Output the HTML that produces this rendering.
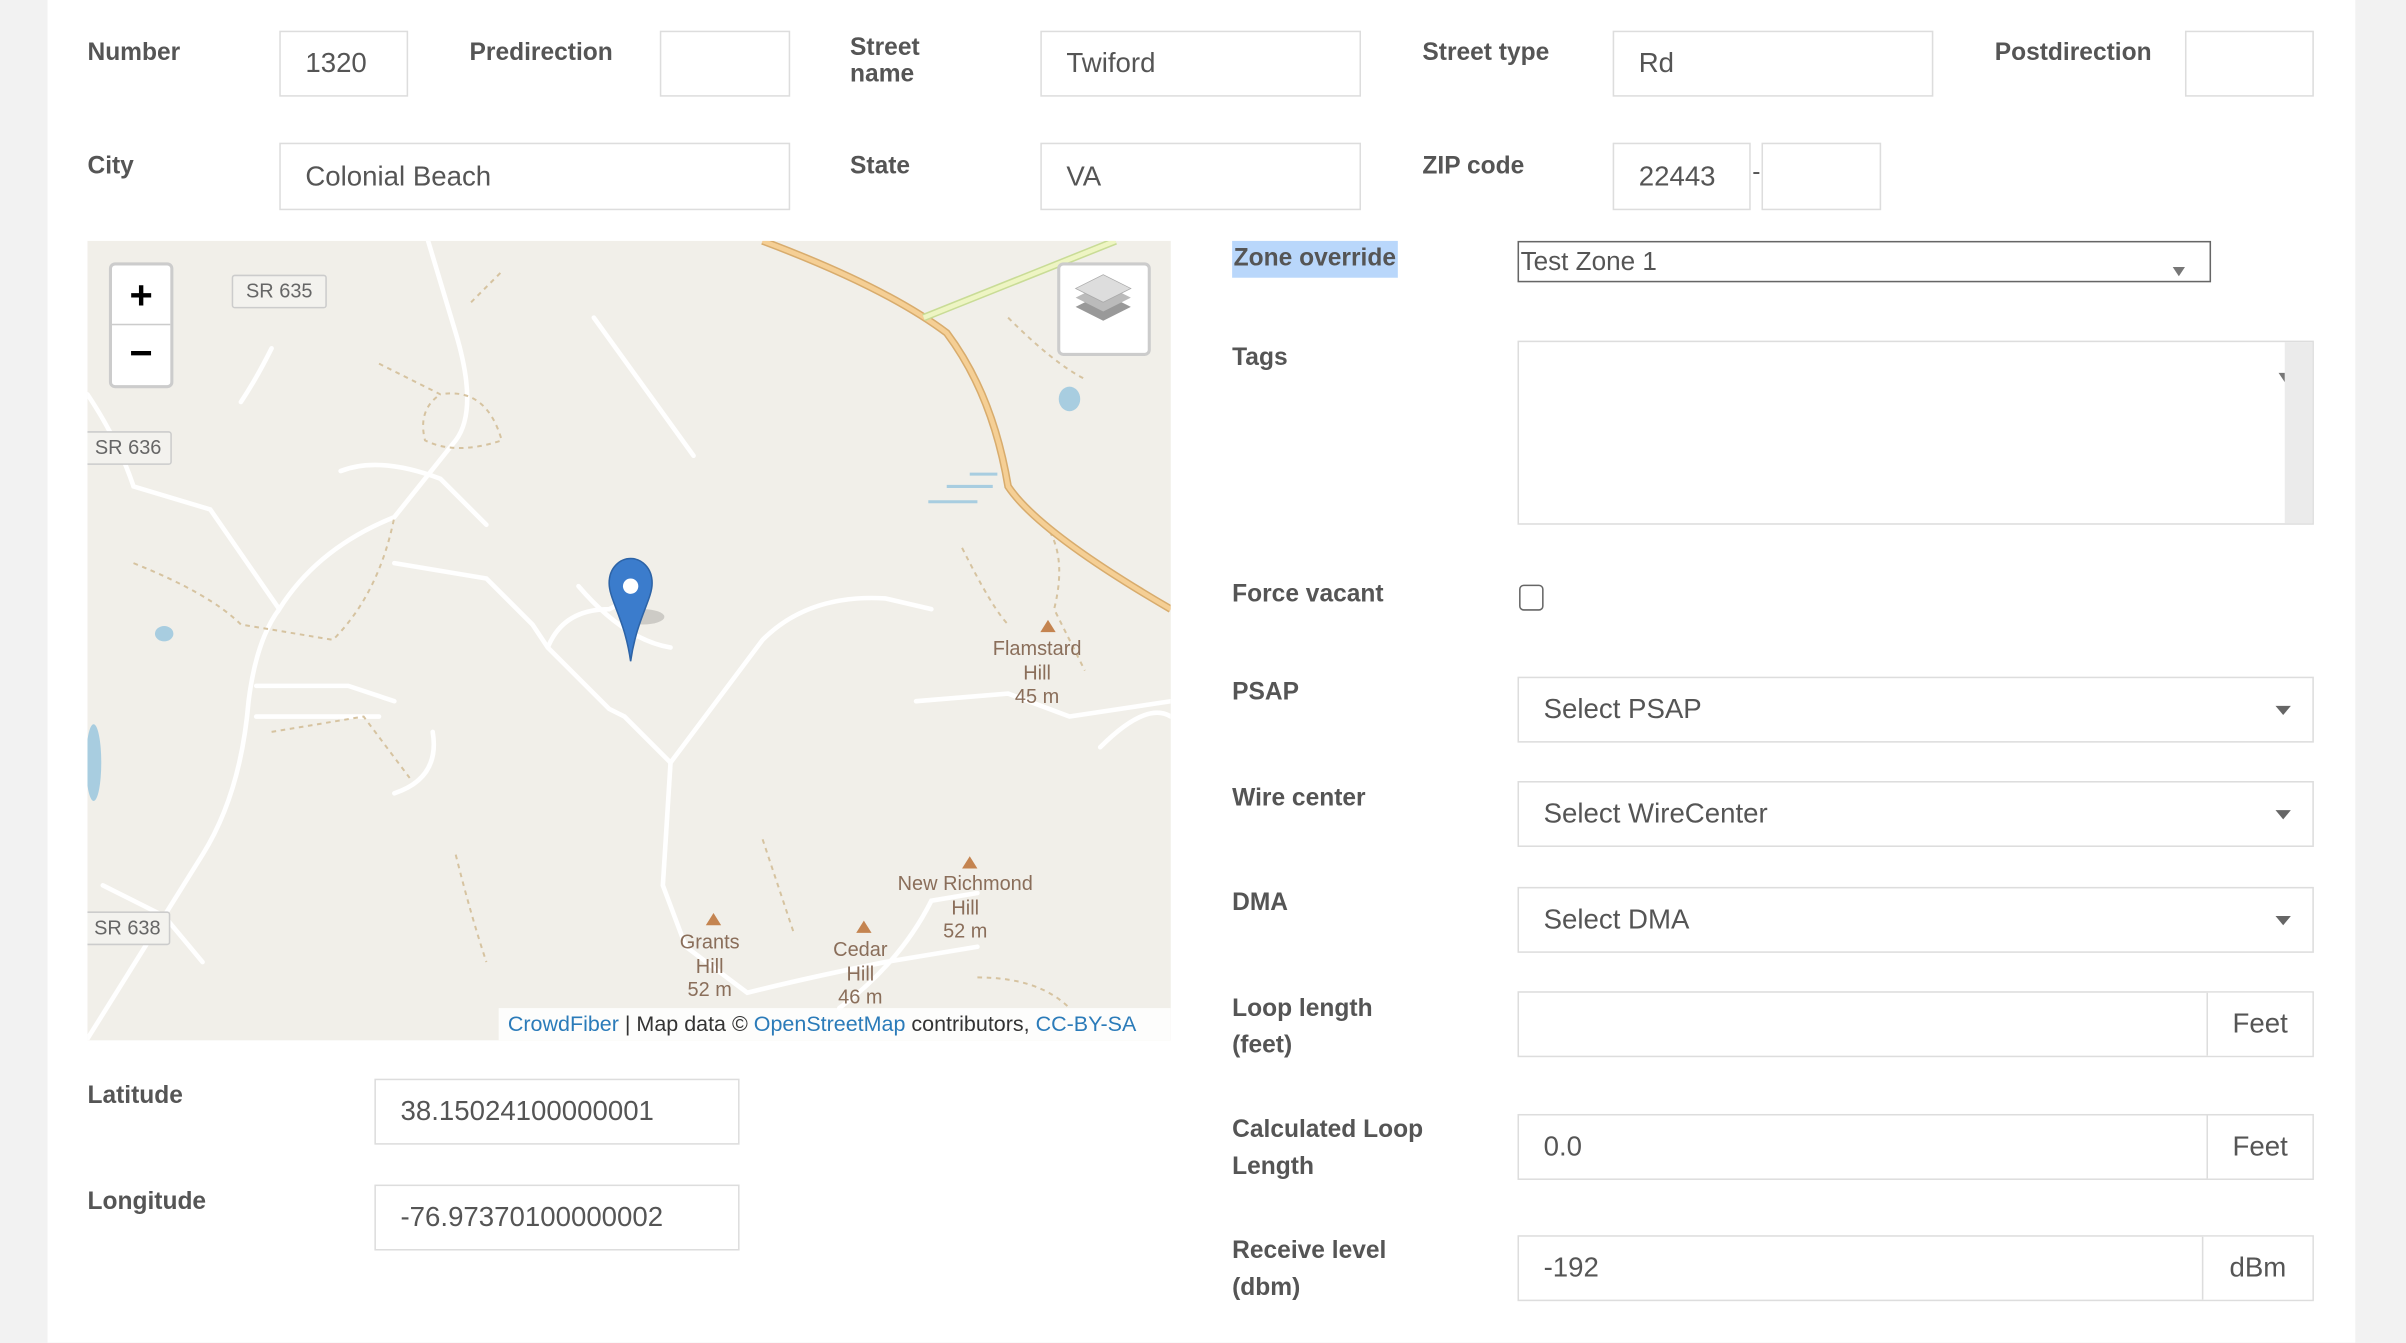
<!DOCTYPE html>
<html><head><meta charset="utf-8">
<style>
*{box-sizing:border-box;margin:0;padding:0}
html,body{width:2406px;height:1342px;overflow:hidden;background:#f2f2f2}
#w{position:absolute;left:0;top:0;width:1568px;height:875px;transform:scale(1.5344);transform-origin:0 0;font-family:"Liberation Sans",sans-serif;color:#555}
.panel{position:absolute;left:31px;top:0;width:1504px;height:875px;background:#fff}
.lb{position:absolute;font-weight:bold;font-size:16px;line-height:24px;color:#555}
.in{position:absolute;border:1px solid #ddd;background:#fff;font-size:18px;color:#555;padding-left:16px;display:flex;align-items:center}
.sel::after{content:"";position:absolute;right:14px;top:50%;margin-top:-3px;border-left:5px solid transparent;border-right:5px solid transparent;border-top:6px solid #666}
.add{position:absolute;right:0;top:0;bottom:0;border-left:1px solid #ddd;background:#fff;display:flex;align-items:center;justify-content:center}
.ml{position:absolute;font-size:13px;color:#8a6e5a;text-align:center;line-height:15.5px}
</style></head><body><div id="w">
<div class="panel"></div>

<div class="lb" style="left:57px;top:23px">Number</div>
<div class="in" style="left:182px;top:20px;width:84px;height:43px">1320</div>
<div class="lb" style="left:306px;top:23px">Predirection</div>
<div class="in" style="left:430px;top:20px;width:85px;height:43px"></div>
<div class="lb" style="left:554px;top:23px;line-height:17px">Street<br>name</div>
<div class="in" style="left:678px;top:20px;width:209px;height:43px">Twiford</div>
<div class="lb" style="left:927px;top:23px">Street type</div>
<div class="in" style="left:1051px;top:20px;width:209px;height:43px">Rd</div>
<div class="lb" style="left:1300px;top:23px">Postdirection</div>
<div class="in" style="left:1424px;top:20px;width:84px;height:43px"></div>

<div class="lb" style="left:57px;top:97px">City</div>
<div class="in" style="left:182px;top:93px;width:333px;height:44px">Colonial Beach</div>
<div class="lb" style="left:554px;top:97px">State</div>
<div class="in" style="left:678px;top:93px;width:209px;height:44px">VA</div>
<div class="lb" style="left:927px;top:97px">ZIP code</div>
<div class="in" style="left:1051px;top:93px;width:90px;height:44px">22443</div>
<div style="position:absolute;left:1142px;top:104px;font-size:16px">-</div>
<div class="in" style="left:1148px;top:93px;width:78px;height:44px"></div>

<!-- map -->
<div style="position:absolute;left:57px;top:157px;width:706px;height:521px;background:#f1efe9;overflow:hidden">
<svg width="706" height="521" style="position:absolute;left:0;top:0" fill="none">
<g stroke="#fff" stroke-width="3" stroke-linecap="round">
<path d="M0 100 Q20 130 30 160 L80 175 L125 240 Q150 200 200 180 L240 130 Q255 110 240 60 L222 0"/>
<path d="M125 240 Q110 260 105 300 Q100 360 75 400 L0 520"/>
<path d="M110 290 L170 290 L200 300"/>
<path d="M110 310 L190 310"/>
<path d="M200 210 L260 220 L290 250 L300 265 L340 305 L350 310 L380 340 L440 260 Q470 230 520 233 L550 240"/>
<path d="M380 340 L375 420 L390 460 L430 490 Q470 480 520 470 L580 460"/>
<path d="M320 225 Q350 260 380 265"/>
<path d="M300 265 Q310 240 340 240 L360 230"/>
<path d="M165 150 Q190 140 230 155 L260 185"/>
<path d="M540 300 L600 295 L640 310 L706 300"/>
<path d="M490 500 Q530 470 550 430 L580 425"/>
<path d="M660 330 Q690 300 706 310"/>
<path d="M10 420 L50 440 L75 470"/>
<path d="M225 320 Q230 350 200 360"/>
<path d="M120 70 Q110 90 100 105"/>
<path d="M330 50 L395 140"/>
</g>
<g stroke="#d6c3a0" stroke-width="1.3" stroke-dasharray="3 3">
<path d="M190 80 L230 100 Q260 95 270 130 Q240 140 220 130 Q215 110 230 100"/>
<path d="M250 40 L270 20"/>
<path d="M30 210 Q80 230 100 250 L160 260 Q190 230 200 180"/>
<path d="M570 200 Q590 240 600 250"/>
<path d="M620 180 Q640 200 630 240 L650 280"/>
<path d="M120 320 L180 310 L210 350"/>
<path d="M440 390 Q450 420 460 450"/>
<path d="M580 480 Q620 480 640 500"/>
<path d="M240 400 Q250 440 260 470"/>
<path d="M600 50 Q630 80 650 90"/>
</g>
<path d="M440 0 Q520 30 560 60 Q590 100 600 160 Q620 190 706 240" stroke="#d8ac6d" stroke-width="5"/>
<path d="M440 0 Q520 30 560 60 Q590 100 600 160 Q620 190 706 240" stroke="#f5cf95" stroke-width="3"/>
<path d="M545 50 L670 0" stroke="#c9dc96" stroke-width="5"/>
<path d="M545 50 L670 0" stroke="#eef5c3" stroke-width="3"/>
<g fill="#a8cde0"><ellipse cx="640" cy="103" rx="7" ry="8"/><ellipse cx="50" cy="256" rx="6" ry="5"/><ellipse cx="4" cy="340" rx="5" ry="25"/></g>
<g stroke="#a8cde0" stroke-width="2"><path d="M575 152 L593 152M560 160 L590 160M548 170 L580 170"/></g>
<g fill="#c48450"><path d="M626 247 L631 255 L621 255Z"/><path d="M575 401 L580 409 L570 409Z"/><path d="M408 438 L413 446 L403 446Z"/><path d="M506 443 L511 451 L501 451Z"/></g>
<ellipse cx="362" cy="245" rx="14" ry="5" fill="#000" opacity=".15"/>
<path d="M354 209 C354 199 361 193 368 193 C375 193 382 199 382 209 C382 220 372 232 368 260 C364 232 354 220 354 209Z" transform="translate(-14 14)" fill="#3b7ccc" stroke="#2d63a6" stroke-width="1"/>
<circle cx="354" cy="225" r="5" fill="#fff"/>
</svg>
<div style="position:absolute;left:94px;top:22px;width:62px;height:22px;background:#f3f2ee;border:1px solid #ccc;border-radius:2px;font-size:13px;color:#666;text-align:center;line-height:20px">SR 635</div>
<div style="position:absolute;left:-2px;top:124px;width:57px;height:22px;background:#f3f2ee;border:1px solid #ccc;border-radius:2px;font-size:13px;color:#666;text-align:center;line-height:20px">SR 636</div>
<div style="position:absolute;left:-2px;top:437px;width:56px;height:22px;background:#f3f2ee;border:1px solid #ccc;border-radius:2px;font-size:13px;color:#666;text-align:center;line-height:20px">SR 638</div>
<div class="ml" style="left:590px;top:258px">Flamstard<br>Hill<br>45 m</div>
<div class="ml" style="left:528px;top:411px">New Richmond<br>Hill<br>52 m</div>
<div class="ml" style="left:386px;top:449px">Grants<br>Hill<br>52 m</div>
<div class="ml" style="left:486px;top:454px">Cedar<br>Hill<br>46 m</div>
<div style="position:absolute;left:14px;top:14px;width:42px;height:82px;background:#fff;border:2px solid #ccc;border-radius:4px">
<div style="height:39px;border-bottom:1px solid #ccc;text-align:center;font-size:26px;line-height:38px;color:#000;font-weight:bold">+</div>
<div style="height:39px;text-align:center;font-size:26px;line-height:36px;color:#000;font-weight:bold">−</div></div>
<div style="position:absolute;left:632px;top:14px;width:61px;height:61px;background:#fff;border:2px solid #ccc;border-radius:4px">
<svg width="57" height="57"><path d="M28 36 L46 27 L28 18 L10 27Z" fill="#999"/><path d="M28 30 L46 21 L28 12 L10 21Z" fill="#bbb"/><path d="M28 24 L46 15 L28 6 L10 15Z" fill="#ddd" stroke="#aaa" stroke-width=".5"/></svg></div>
<div style="position:absolute;left:268px;top:500px;width:438px;height:21px;background:rgba(255,255,255,.85);font-size:14px;color:#333;line-height:21px;padding-left:6px">
<span style="color:#2b7bb9">CrowdFiber</span> | Map data © <span style="color:#2b7bb9">OpenStreetMap</span> contributors, <span style="color:#2b7bb9">CC-BY-SA</span></div>
</div>

<div class="lb" style="left:57px;top:703px">Latitude</div>
<div class="in" style="left:244px;top:703px;width:238px;height:43px">38.15024100000001</div>
<div class="lb" style="left:57px;top:772px">Longitude</div>
<div class="in" style="left:244px;top:772px;width:238px;height:43px">-76.97370100000002</div>

<!-- right -->
<div class="lb" style="left:803px;top:157px;background:#b9d7fb;padding:0 1px">Zone override</div>
<div style="position:absolute;left:989px;top:157px;width:452px;height:27px;border:1px solid #666;font-size:17px;line-height:25px;color:#555;padding-left:1px">Test Zone 1
<div style="position:absolute;right:16px;top:16px;border-left:4px solid transparent;border-right:4px solid transparent;border-top:6px solid #777"></div></div>

<div class="lb" style="left:803px;top:222px">Tags</div>
<div style="position:absolute;left:989px;top:222px;width:519px;height:120px;border:1px solid #ddd;background:#fff">
<div style="position:absolute;right:0;top:0;bottom:0;width:18px;background:#ebebeb"></div>
<div style="position:absolute;right:18px;top:20px;border-left:4px solid transparent;border-right:0;border-top:6px solid #777"></div></div>

<div class="lb" style="left:803px;top:376px">Force vacant</div>
<div style="position:absolute;left:990px;top:381px;width:16px;height:17px;border:1.5px solid #666;border-radius:3px;background:#fff"></div>

<div class="lb" style="left:803px;top:440px">PSAP</div>
<div class="in sel" style="left:989px;top:441px;width:519px;height:43px">Select PSAP</div>
<div class="lb" style="left:803px;top:509px">Wire center</div>
<div class="in sel" style="left:989px;top:509px;width:519px;height:43px">Select WireCenter</div>
<div class="lb" style="left:803px;top:577px">DMA</div>
<div class="in sel" style="left:989px;top:578px;width:519px;height:43px">Select DMA</div>

<div class="lb" style="left:803px;top:646px">Loop length<br>(feet)</div>
<div class="in" style="left:989px;top:646px;width:519px;height:43px"><div class="add" style="width:69px">Feet</div></div>
<div class="lb" style="left:803px;top:725px">Calculated Loop<br>Length</div>
<div class="in" style="left:989px;top:726px;width:519px;height:43px">0.0<div class="add" style="width:69px">Feet</div></div>
<div class="lb" style="left:803px;top:804px">Receive level<br>(dbm)</div>
<div class="in" style="left:989px;top:805px;width:519px;height:43px">-192<div class="add" style="width:72px">dBm</div></div>
</div></body></html>
